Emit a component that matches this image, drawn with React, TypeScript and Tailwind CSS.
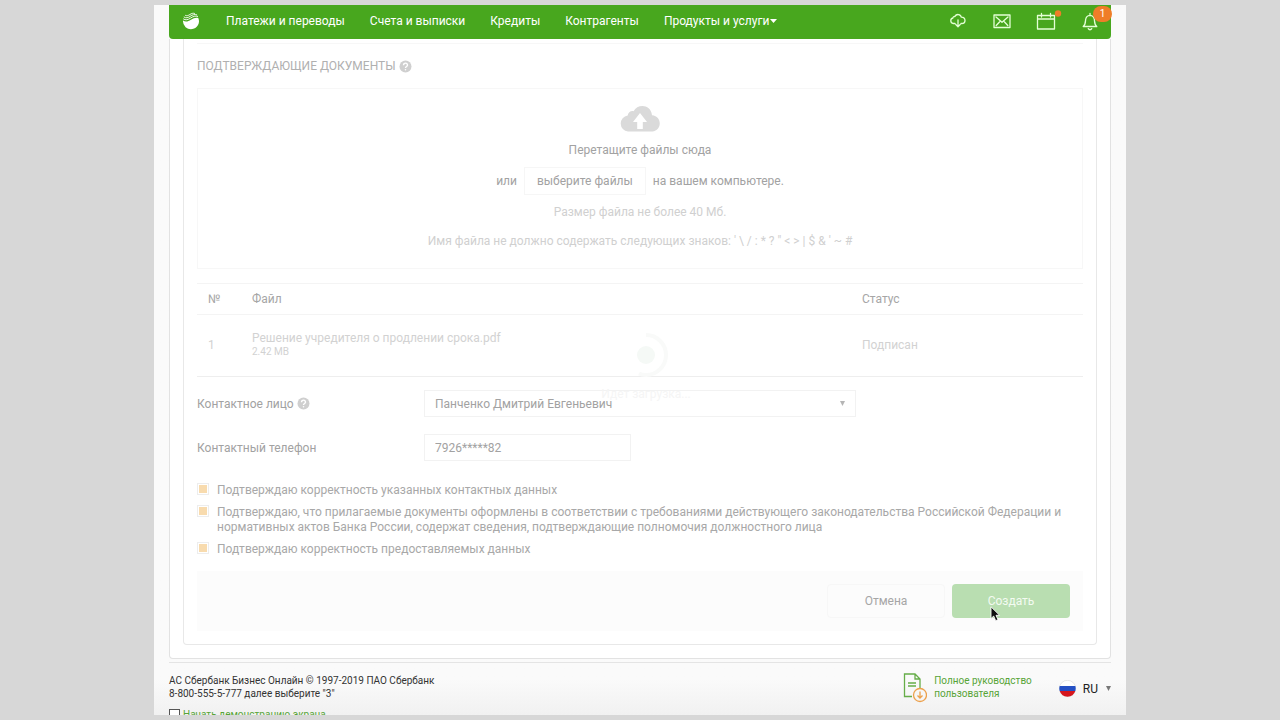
import { useState } from 'react';
import type { ReactNode } from 'react';

const navItems = ['Платежи и переводы', 'Счета и выписки', 'Кредиты', 'Контрагенты'];

const files = [
  { id: 1, name: 'Решение учредителя о продлении срока.pdf', size: '2.42 MB', status: 'Подписан' },
];

const confirmations = [
  'Подтверждаю корректность указанных контактных данных',
  'Подтверждаю, что прилагаемые документы оформлены в соответствии с требованиями действующего законодательства Российской Федерации и нормативных актов Банка России, содержат сведения, подтверждающие полномочия должностного лица',
  'Подтверждаю корректность предоставляемых данных',
];

const Logo = () => (
  <svg width="18" height="18" viewBox="0 0 18 18" aria-hidden="true">
    <path d="M1 8.600c2.500 1.700 5 1.100 8-.8 2.600-1.700 4.900-2.600 7.300-1.800A8 8 0 1 1 1 8.600z" fill="#fff" />
    <g fill="none" stroke="#fff" strokeWidth="0.900">
      <path d="M1.200 6.800c2.400 1.700 4.800 1 7.300-.7 2.500-1.700 4.900-2.500 7.500-1.600" />
      <path d="M1.800 4.900c2.200 1.500 4.200.9 6.400-.6 2.200-1.500 4.400-2.300 6.900-1.400" />
      <path d="M3.200 3.300c1.600.8 3 .3 4.700-.8 1.500-1 3.200-1.600 5-1" />
    </g>
  </svg>
);

const HelpIcon = () => (
  <svg width="13" height="13" viewBox="0 0 13 13" aria-hidden="true">
    <circle cx="6.500" cy="6.500" r="6" fill="#cfcfcf" />
    <path d="M4.500 5.200c0-2.800 4.200-2.600 4 0-.1 1.300-2 1.400-2 2.800" fill="none" stroke="#fff" strokeWidth="1.400" />
    <circle cx="6.500" cy="9.800" r="0.800" fill="#fff" />
  </svg>
);

const HeaderIcon = ({ label, children }: { label: string; children: ReactNode }) => (
  <button type="button" aria-label={label} className="flex h-5 w-5 items-center justify-center">
    <svg className="overflow-visible" width="20" height="20" viewBox="0 0 20 20" fill="none" stroke="#e4ffd6" strokeWidth="1.300" strokeLinecap="round" strokeLinejoin="round">
      {children}
    </svg>
  </button>
);

const Header = () => (
  <header className="flex h-[34px] items-center justify-between rounded-b-sm bg-[#48a71e] pr-[11px] pb-0.5 pl-[13px] text-xs text-white">
    <div className="flex items-center">
      <Logo />
      <nav className="ml-[26px] flex gap-[25px]">
        {navItems.map((item) => (
          <a key={item} href="#">{item}</a>
        ))}
        <a href="#" className="flex items-center gap-px">
          Продукты и услуги
          <svg className="shrink-0" width="7" height="4" viewBox="0 0 7 4" aria-hidden="true">
            <path d="M0 0h7L3.500 4z" fill="#fff" />
          </svg>
        </a>
      </nav>
    </div>
    <div className="flex items-center gap-6">
      <HeaderIcon label="Загрузки">
        <path d="M7 12.500H5.300a2.800 2.800 0 0 1-.4-5.500C5 5.700 6 5.300 6.900 5.600 8.300 2.500 12.800 3 13.300 6.200c4.800-.2 4.900 6.100.4 6.300H13M10 8.800v6.700M7.800 13.500l2.200 2.200 2.200-2.200" />
      </HeaderIcon>
      <HeaderIcon label="Письма">
        <path d="M2 4h16v12.500H2zM4 6l6 5.300L16 6M4.200 14.500l3.500-3.700M15.800 14.500l-3.500-3.700" />
      </HeaderIcon>
      <HeaderIcon label="Календарь">
        <path d="M1.500 4.500h17v13.500h-17zM1.500 8h17M5.500 2.500V6M14.500 2.500V6" />
        <circle cx="22" cy="2.500" r="3.200" fill="#ef7d28" stroke="none" />
      </HeaderIcon>
      <div className="relative flex">
        <HeaderIcon label="Уведомления">
          <path d="M3.200 15.500c2.300-1.700 2.200-4.300 2.400-6.700.3-2.600 1.800-4.300 4.400-4.500 2.600.2 4.100 1.900 4.400 4.500.2 2.400.1 5 2.400 6.700zM10 4.300V2.500M8.300 17.600c.8 1.500 2.600 1.500 3.400 0" />
        </HeaderIcon>
        <span className="absolute -top-[5px] left-[13px] flex h-4 w-[19px] items-center justify-center rounded-full bg-[#ef7d28] text-[10px] leading-3">1</span>
      </div>
    </div>
  </header>
);

const DropZone = () => (
  <section className="flex h-[181px] flex-col items-center border border-[#f7f7f7] pt-4 text-xs text-[#a2a2a2]">
    <svg width="40" height="27" viewBox="0 0 40 27" aria-hidden="true">
      <path d="M8 26.500a8 8 0 0 1-.3-15.900C8 7.500 11 5.500 13.600 6.300 17.500-1.800 31-1 32 10.200c10.600.8 10 15.600.3 16.300z" fill="#dadada" />
      <path d="M20 8l7 9h-4.200v7h-5.600v-7H13z" fill="#fff" />
    </svg>
    <p className="mt-2.5 leading-4">Перетащите файлы сюда</p>
    <div className="mt-[9px] flex h-7 items-center gap-[7px]">
      <span>или</span>
      <button type="button" className="h-7 border border-[#f6f6f6] px-3">выберите файлы</button>
      <span>на вашем компьютере.</span>
    </div>
    <p className="mt-[9px] leading-4 text-[#d0d0d0]">Размер файла не более 40 Мб.</p>
    <p className="mt-[13px] leading-4 text-[#d0d0d0]">{'Имя файла не должно содержать следующих знаков: \' \\ / : * ? " < > | $ & \' ~ #'}</p>
  </section>
);

const FilesTable = () => (
  <table className="mt-3.5 w-full table-fixed border-collapse text-left text-xs">
    <thead>
      <tr className="h-[31px] border-y border-[#f4f4f4] text-[#a6a6a6]">
        <th className="w-[55px] pl-[11px] font-normal">№</th>
        <th className="font-normal">Файл</th>
        <th className="w-[221px] font-normal">Статус</th>
      </tr>
    </thead>
    <tbody>
      {files.map((file) => (
        <tr key={file.id} className="h-[62px] border-b border-[#eeeeee] text-[#d2d2d2]">
          <td className="pb-0.5 pl-[11px]">{file.id}</td>
          <td className="pb-0.5">
            <div className="leading-[14px]">{file.name}</div>
            <div className="text-[10px] leading-[14px]">{file.size}</div>
          </td>
          <td className="pb-0.5">{file.status}</td>
        </tr>
      ))}
    </tbody>
  </table>
);

const Loader = () => (
  <div className="pointer-events-none absolute top-[291px] left-1/2 flex w-24 -translate-x-[42px] flex-col items-center" role="status">
    <svg width="50" height="50" viewBox="0 0 50 50" aria-hidden="true">
      <path d="M25 5a20 20 0 0 1 0 40q-4 0-7-1.500" fill="none" stroke="#f9faf9" strokeWidth="4" />
      <circle cx="25" cy="25" r="9" fill="#f5f9f6" />
    </svg>
    <span className="mt-1.5 text-xs leading-4 text-[#f5f5f5]">Идет загрузка...</span>
  </div>
);

const Footer = () => (
  <footer className="mt-[3px] border-t border-[#e4e4e4] text-[10px] leading-[13px]">
    <div className="flex h-[43px] items-center justify-between pt-1">
      <p className="text-[#333]">
        АС Сбербанк Бизнес Онлайн © 1997-2019 ПАО Сбербанк
        <br />
        8-800-555-5-777 далее выберите "3"
      </p>
      <div className="flex items-center">
        <a href="#" className="flex items-center gap-[7px] text-[#57a437]">
          <svg width="24" height="32" viewBox="0 0 24 32" fill="none" aria-hidden="true">
            <path d="M9 25.500H1.500V3H12l5 5v9M12 3v5h5M5 12h8M5 15h8" stroke="#66ad48" strokeWidth="1.300" />
            <circle cx="17" cy="24" r="6.500" stroke="#eca04b" strokeWidth="1.300" />
            <path d="M17 20.500v6.500M14.500 24.500L17 27l2.500-2.500" stroke="#eca04b" strokeWidth="1.300" />
          </svg>
          <span>
            Полное руководство
            <br />
            пользователя
          </span>
        </a>
        <button type="button" className="ml-[27px] flex items-center pt-1 text-xs text-[#222]">
          <svg width="17" height="17" viewBox="0 0 17 17" aria-hidden="true">
            <circle cx="8.500" cy="8.500" r="8.200" fill="#fff" stroke="#d8d8d8" strokeWidth="0.600" />
            <path d="M.7 6h15.600a8.200 8.200 0 0 1 0 5H.7a8.200 8.200 0 0 1 0-5z" fill="#2450c4" />
            <path d="M.7 11h15.600a8.200 8.200 0 0 1-15.600 0z" fill="#d5161e" />
          </svg>
          <span className="ml-[7px]">RU</span>
          <svg className="ml-2" width="5" height="5" viewBox="0 0 5 5" aria-hidden="true">
            <path d="M0 0h5L2.500 5z" fill="#777" />
          </svg>
        </button>
      </div>
    </div>
    <label className="mt-0.5 flex items-center gap-[3px] text-[#57a437]">
      <input type="checkbox" className="h-[11px] w-[11px] appearance-none border border-[#555] bg-white" />
      Начать демонстрацию экрана
    </label>
  </footer>
);

export default function App() {
  const [checked, setChecked] = useState([true, true, true]);
  const [phone, setPhone] = useState('7926*****82');

  const toggle = (index: number) => {
    setChecked((prev) => prev.map((value, i) => (i === index ? !value : value)));
  };

  return (
    <div className="h-screen overflow-hidden bg-[#d7d7d7] py-[5px] font-['Roboto',sans-serif]">
      <div className="mx-auto h-full w-full max-w-[972px] overflow-hidden bg-linear-to-b from-[#fafafa] from-95% to-[#f1f1f1] px-[15px]">
        <Header />
        <main className="rounded-b-sm border-x border-b border-[#e2e2e2] bg-white px-[13px] pb-[13px]">
          <form className="relative rounded-b-sm border-x border-b border-[#e8e8e8] px-[13px] pt-1 pb-[13px]" onSubmit={(e) => e.preventDefault()}>
            <h1 className="flex h-[45px] items-center gap-[3px] border-t border-[#f7f7f7] text-xs text-[#b0b0b0]">
              ПОДТВЕРЖДАЮЩИЕ ДОКУМЕНТЫ
              <HelpIcon />
            </h1>
            <DropZone />
            <FilesTable />

            <div className="mt-[13px] grid grid-cols-[227px_1fr] items-center gap-y-[17px] text-xs text-[#a2a2a2]">
              <label htmlFor="contact" className="flex items-center gap-[3px]">
                Контактное лицо
                <HelpIcon />
              </label>
              <div className="relative max-w-[432px]">
                <select id="contact" className="block h-[27px] w-full appearance-none border border-[#f2f2f2] bg-transparent px-2.5">
                  <option>Панченко Дмитрий Евгеньевич</option>
                </select>
                <svg className="pointer-events-none absolute top-[11px] right-[11px]" width="5" height="5" viewBox="0 0 5 5" aria-hidden="true">
                  <path d="M0 0h5L2.500 5z" fill="#b5b5b5" />
                </svg>
              </div>
              <label htmlFor="phone">Контактный телефон</label>
              <input
                id="phone"
                value={phone}
                onChange={(e) => setPhone(e.target.value)}
                className="h-[27px] w-[207px] border border-[#f2f2f2] px-2.5"
              />
            </div>

            <div className="mt-[22px] flex flex-col gap-[7px] text-xs leading-[15px] text-[#a8a8a8]">
              {confirmations.map((text, index) => (
                <label key={text} className="flex items-start gap-2">
                  <input
                    type="checkbox"
                    checked={checked[index]}
                    onChange={() => toggle(index)}
                    className="h-3 w-3 shrink-0 appearance-none border border-[#ededed] bg-white bg-clip-content p-px checked:bg-[#f8dbae]"
                  />
                  {text}
                </label>
              ))}
            </div>

            <div className="mt-3.5 flex h-[60px] items-center justify-end gap-[7px] bg-[#fcfcfc] pr-[13px] text-xs">
              <button type="button" className="h-[34px] w-[118px] rounded-sm border border-[#f7f7f7] text-[#a6a6a6]">Отмена</button>
              <button type="submit" className="relative h-[34px] w-[118px] rounded-sm bg-[#b9deb1] text-[#f4fbf2]">
                Создать
                <svg className="absolute top-[22px] left-[38px]" width="12" height="16" viewBox="0 0 12 16" aria-hidden="true">
                  <path d="M1 .8v11.700l2.700-2.400 2 4.600 2.300-1-2-4.400h3.600z" fill="#111" stroke="#fff" strokeWidth="0.900" />
                </svg>
              </button>
            </div>
            <Loader />
          </form>
        </main>
        <Footer />
      </div>
    </div>
  );
}
